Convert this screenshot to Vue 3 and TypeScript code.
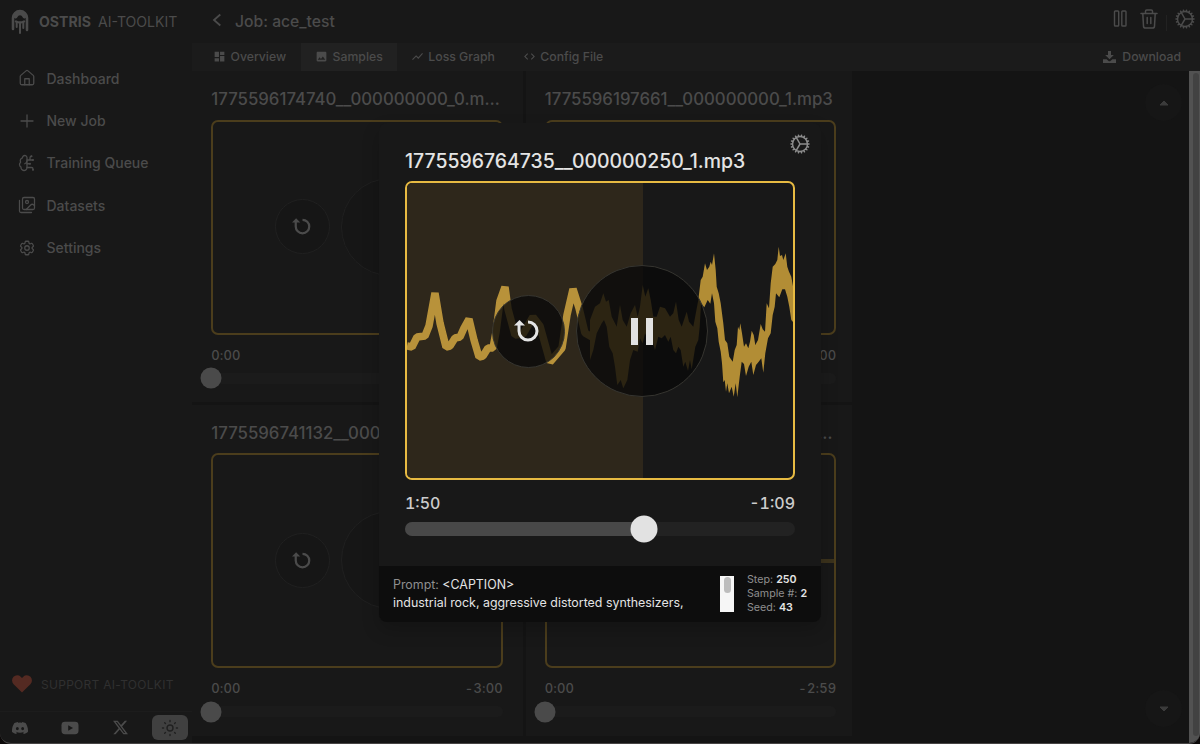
<script setup lang="ts">
interface NavItem { label: string; icon: string }
interface Sample { title: string; total: string; flat?: boolean }

const nav: NavItem[] = [
  { label: 'Dashboard', icon: 'home' },
  { label: 'New Job', icon: 'plus' },
  { label: 'Training Queue', icon: 'brain' },
  { label: 'Datasets', icon: 'images' },
  { label: 'Settings', icon: 'settings' },
]

const tabs: NavItem[] = [
  { label: 'Overview', icon: 'M3 13h8V3H3v10zm0 8h8v-6H3v6zm10 0h8V11h-8v10zm0-18v6h8V3h-8z' },
  { label: 'Samples', icon: 'M21 19V5c0-1.1-.9-2-2-2H5c-1.1 0-2 .9-2 2v14c0 1.1.9 2 2 2h14c1.1 0 2-.9 2-2zM8.5 13.5l2.5 3.01L14.5 12l4.5 6H5l3.500-4.500z' },
  { label: 'Loss Graph', icon: 'M3.5 18.490l6-6.010 4 4L22 6.920l-1.410-1.410-7.090 7.970-4-4L2 16.990z' },
  { label: 'Config File', icon: 'M9.400 16.600L4.800 12l4.600-4.600L8 6l-6 6 6 6 1.400-1.400zm5.200 0l4.600-4.600-4.600-4.600L16 6l6 6-6 6-1.400-1.400z' },
]

const samples: Sample[] = [
  { title: '1775596174740__000000000_0.mp3', total: '-3:00' },
  { title: '1775596197661__000000000_1.mp3', total: '-3:00' },
  { title: '1775596741132__000000250_0.mp3', total: '-3:00' },
  { title: '1775596764735__000000250_1.mp3', total: '-2:59', flat: true },
]

const current = 110
const duration = 179.8
const progress = `${(current / duration) * 100}%`

// Waveform samples: a thin trace for the intro, then a min/max envelope.
const intro = '0,163 5,164 10,154 18,153 22,143 28,110 33,140 39,164 43,163 48,155 53,154 57,145 62,136 67,157 72,174 76,173 81,165 86,165 89,149 93,118 98,104 101,126 108,152 116,151 126,134 133,143 143,179 155,165 160,132 166,106 172,125 178,150 185,154'
const top = '0,600 15,560 30,550 40,520 48,545 56,540 65,590 80,620 90,555 98,600 110,620 122,580 135,555 143,590 150,560 158,495 166,530 175,505 182,540 190,590 200,590 210,560 225,565 240,590 250,580 258,545 266,600 275,620 290,575 297,605 310,620 325,540 332,480 338,470 345,430 351,450 358,440 362,425 366,435 372,400 377,450 380,500 386,520 392,550 400,610 405,660 412,670 418,710 428,725 434,690 440,675 444,620 448,630 451,610 456,640 462,680 468,670 475,685 480,665 485,632 491,645 496,675 504,660 512,612 518,628 525,635 530,550 537,565 542,490 548,440 556,432 562,420 566,380 570,408 576,405 580,420 587,400 592,440 597,455 604,470 612,515'
const bottom = '612,610 604,600 598,560 592,530 585,508 577,508 568,532 558,520 554,560 548,585 542,640 534,655 526,700 520,758 514,715 506,725 498,735 490,765 484,725 476,740 468,768 462,732 455,725 449,770 442,832 437,790 431,830 425,800 417,820 412,790 408,815 404,780 400,787 396,730 392,695 386,665 382,625 376,605 372,550 366,520 361,551 353,540 343,562 333,550 329,620 325,660 316,680 305,748 300,720 294,752 286,725 280,740 272,690 265,680 258,700 250,690 242,650 235,665 225,645 215,655 205,650 195,690 185,655 175,660 165,640 158,670 150,655 143,695 130,690 120,720 112,780 100,805 92,780 82,795 75,740 68,700 58,680 50,620 42,600 35,610 20,640 10,690 0,720'
const toPoints = (s: string): string =>
  s.split(' ').map((p) => {
    const [x, y] = p.split(',').map(Number)
    return `${(590 + x / 3 - 407).toFixed(1)},${(120 + y / 3 - 183).toFixed(1)}`
  }).join(' ')
const envelope = `${toPoints(top)} ${toPoints(bottom)}`
</script>

<template>
  <div class="app">
    <aside class="sidebar">
      <div class="brand">
        <svg width="18" height="26" viewBox="0 0 18 26" fill="none" stroke="currentColor" stroke-linecap="round">
          <path d="M2 20V9a7 7 0 0 1 14 0v12" stroke-width="2.600" />
          <path d="M4.600 7.500a4.600 4.600 0 0 1 8.800 0" stroke-width="4" />
          <path d="M5.700 14v4M9 14v10M12.300 14v5" stroke-width="2" />
          <path d="M5 12.500q4 2 8 0" stroke-width="2.500" />
        </svg>
        <span><b>OSTRIS</b><i>AI-TOOLKIT</i></span>
      </div>
      <nav class="nav">
        <a v-for="n in nav" :key="n.label">
          <svg width="18" height="18" viewBox="0 0 24 24" fill="none" stroke="currentColor" stroke-width="1.700" stroke-linecap="round" stroke-linejoin="round">
            <template v-if="n.icon === 'home'"><path d="M15 21v-8H9v8" /><path d="M3 10a2 2 0 0 1 .7-1.500l7-6a2 2 0 0 1 2.600 0l7 6A2 2 0 0 1 21 10v9a2 2 0 0 1-2 2H5a2 2 0 0 1-2-2z" /></template>
            <path v-else-if="n.icon === 'plus'" d="M4 12h16M12 4v16" />
            <template v-else-if="n.icon === 'brain'"><path d="M12 5a3 3 0 1 0-5.997.125 4 4 0 0 0-2.526 5.770 4 4 0 0 0 .556 6.588A4 4 0 1 0 12 18Z" /><path d="M9 13a4.500 4.500 0 0 0 3-4M12 13h4M12 18h6a2 2 0 0 1 2 2v1M12 8h8M16 8V5a2 2 0 0 1 2-2" /><circle cx="16" cy="13" r=".5" /><circle cx="18" cy="3" r=".5" /><circle cx="20" cy="21" r=".5" /><circle cx="20" cy="8" r=".5" /></template>
            <template v-else-if="n.icon === 'images'"><path d="M18 22H4a2 2 0 0 1-2-2V6M22 13l-1.300-1.300a2.400 2.400 0 0 0-3.400 0L11 18" /><circle cx="12" cy="8" r="2" /><rect x="6" y="2" width="16" height="16" rx="2" /></template>
            <template v-else><path d="M9.594 3.940c.09-.542.56-.94 1.110-.94h2.593c.55 0 1.020.398 1.110.94l.213 1.281c.063.374.313.686.645.87.074.04.147.083.22.127.325.196.72.257 1.075.124l1.217-.456a1.125 1.125 0 0 1 1.370.49l1.296 2.247a1.125 1.125 0 0 1-.26 1.431l-1.003.827c-.293.241-.438.613-.43.992a7.723 7.723 0 0 1 0 .255c-.008.378.137.75.43.991l1.004.827c.424.35.534.955.26 1.430l-1.298 2.247a1.125 1.125 0 0 1-1.369.491l-1.217-.456c-.355-.133-.75-.072-1.076.124a6.470 6.470 0 0 1-.22.128c-.331.183-.581.495-.644.869l-.213 1.281c-.09.543-.56.94-1.110.94h-2.594c-.55 0-1.019-.398-1.110-.94l-.213-1.281c-.062-.374-.312-.686-.644-.87a6.520 6.520 0 0 1-.22-.127c-.325-.196-.72-.257-1.076-.124l-1.217.456a1.125 1.125 0 0 1-1.369-.49l-1.297-2.247a1.125 1.125 0 0 1 .26-1.431l1.004-.827c.292-.24.437-.613.43-.991a6.932 6.932 0 0 1 0-.255c.007-.38-.138-.751-.43-.992l-1.004-.827a1.125 1.125 0 0 1-.26-1.430l1.297-2.247a1.125 1.125 0 0 1 1.370-.491l1.216.456c.356.133.751.072 1.076-.124.072-.044.146-.086.22-.128.332-.183.582-.495.644-.869l.214-1.280Z" /><circle cx="12" cy="12" r="3" /></template>
          </svg>
          <span>{{ n.label }}</span>
        </a>
      </nav>
      <div class="support">
        <svg width="20" height="18" viewBox="0 0 20 18"><path d="M10 17.500L1.600 9.200A5.300 5.300 0 0 1 1.500 1.800 5 5 0 0 1 8.700 1.700L10 3l1.300-1.300a5 5 0 0 1 7.200.1 5.300 5.300 0 0 1-.1 7.400z" fill="#542a22" /></svg>
        <span>SUPPORT AI-TOOLKIT</span>
      </div>
      <div class="social">
        <span><svg width="16" height="16" viewBox="0 0 16 16" fill="currentColor"><path d="M13.545 2.907a13.200 13.200 0 0 0-3.257-1.011.05.05 0 0 0-.052.025c-.141.25-.297.577-.406.833a12.200 12.200 0 0 0-3.658 0 8 8 0 0 0-.412-.833.05.05 0 0 0-.052-.025c-1.125.194-2.220.534-3.257 1.011a.04.04 0 0 0-.021.018C.356 6.024-.213 9.047.066 12.032q.003.022.021.037a13.300 13.300 0 0 0 3.995 2.020.05.05 0 0 0 .056-.019q.463-.63.818-1.329a.05.05 0 0 0-.01-.059l-.018-.011a9 9 0 0 1-1.248-.595.05.05 0 0 1-.02-.066l.015-.019q.127-.095.248-.195a.05.05 0 0 1 .051-.007c2.619 1.196 5.454 1.196 8.041 0a.05.05 0 0 1 .053.007q.121.1.248.195a.05.05 0 0 1-.004.085 8 8 0 0 1-1.249.594.05.05 0 0 0-.03.03.05.05 0 0 0 .003.041c.24.465.515.909.817 1.329a.05.05 0 0 0 .056.019 13.200 13.200 0 0 0 4.001-2.020.05.05 0 0 0 .021-.037c.334-3.451-.559-6.449-2.366-9.106a.03.03 0 0 0-.02-.019m-8.198 7.307c-.789 0-1.438-.724-1.438-1.612s.637-1.613 1.438-1.613c.807 0 1.450.73 1.438 1.613 0 .888-.637 1.612-1.438 1.612m5.316 0c-.788 0-1.438-.724-1.438-1.612s.637-1.613 1.438-1.613c.807 0 1.451.73 1.438 1.613 0 .888-.631 1.612-1.438 1.612" /></svg></span>
        <span><svg width="18" height="14" viewBox="0 0 18 14"><rect x=".5" y=".8" width="17" height="12.400" rx="3.400" fill="currentColor" /><path d="M7.200 4.200v5.600L12 7z" fill="#181818" /></svg></span>
        <span><svg width="15" height="15" viewBox="0 0 16 16" fill="currentColor"><path d="M12.600.75h2.454l-5.360 6.142L16 15.250h-4.937l-3.867-5.070-4.425 5.070H.316l5.733-6.570L0 .75h5.063l3.495 4.633L12.601.75Zm-.86 13.028h1.360L4.323 2.145H2.865z" /></svg></span>
        <span class="theme"><svg width="18" height="18" viewBox="0 0 24 24" fill="none" stroke="#202020" stroke-width="1.900" stroke-linecap="round"><circle cx="12" cy="12" r="4" /><path d="M12 2v1.500M12 20.500V22M2 12h1.500M20.500 12H22M4.900 4.900l1 1M18.100 18.100l1 1M4.900 19.100l1-1M18.100 5.900l1-1" /></svg></span>
      </div>
    </aside>

    <main class="main">
      <header class="topbar">
        <svg width="10" height="14" viewBox="0 0 10 14" fill="none" stroke="currentColor" stroke-width="1.800"><path d="M8.300 1.500L2 7l6.300 5.500" /></svg>
        <h1>Job: ace_test</h1>
        <div class="actions">
          <svg width="14" height="18" viewBox="0 0 14 18" fill="none" stroke="currentColor" stroke-width="1.400"><rect x="1.500" y="1" width="4.200" height="15" rx=".8" /><rect x="8.800" y="1" width="4.200" height="15" rx=".8" /></svg>
          <svg class="trash" width="18" height="20" viewBox="0 0 18 20" fill="none" stroke="currentColor" stroke-width="1.500" stroke-linecap="round" stroke-linejoin="round"><path d="M1 4.500h16M5.500 4.500V2.300Q5.500 1 6.800 1h4.400q1.300 0 1.300 1.300v2.200M2.800 4.500l.7 12.600q.1 1.900 2 1.900h7q1.900 0 2-1.900l.7-12.600M7.200 8.500v6M10.800 8.500v6" /></svg>
          <i class="rule"></i>
          <svg width="24" height="24" viewBox="0 0 24 24" fill="none" stroke="currentColor" stroke-width="1.500" stroke-linecap="round"><path d="M4.500 12a7.500 7.500 0 0 0 15 0m-15 0a7.500 7.500 0 1 1 15 0m-15 0H3m16.500 0H21m-1.500 0H12m-8.457 3.077 1.410-.513m14.095-5.130 1.410-.513M5.106 17.785l1.150-.964m11.490-9.642 1.149-.964M7.501 19.795l.75-1.300m7.500-12.990.75-1.300m-6.063 16.658.26-1.477m2.605-14.772.26-1.477m0 17.726-.26-1.477M10.698 4.614l-.26-1.477M16.500 19.794l-.75-1.299M7.500 4.205 12 12m6.894 5.785-1.149-.964M6.256 7.178l-1.150-.964m15.352 8.864-1.410-.513M4.954 9.435l-1.410-.514M12.002 12l-3.750 6.495" /></svg>
        </div>
      </header>
      <div class="tabs">
        <span v-for="t in tabs" :key="t.label" class="tab" :class="{ active: t.label === 'Samples' }">
          <svg width="13" height="13" viewBox="0 0 24 24" fill="currentColor"><path :d="t.icon" /></svg>{{ t.label }}
        </span>
        <span class="tab download">
          <svg width="13" height="14" viewBox="0 0 13 14" fill="currentColor"><path d="M5 1h3v4h2.800L6.500 9.200 2.200 5H5z" /><path d="M0 9.200h3.600l1.700 1.500q1.200 1 2.400 0l1.700-1.500H13V13H0z" /></svg>Download
        </span>
      </div>
      <div class="content">
        <div class="grid">
          <article v-for="s in samples" :key="s.title" class="card">
            <h2>{{ s.title }}</h2>
            <div class="wave">
              <div v-if="s.flat" class="flat"></div>
              <div class="controls">
                <span class="round small"><svg viewBox="0 0 28 28" fill="none" stroke="currentColor" stroke-width="3"><path d="M14 5a9 9 0 1 1-9 9V8" /><path d="M0 8.500L5.500 3l5.500 5.500z" fill="currentColor" stroke="none" /></svg></span>
                <span class="round big"></span>
              </div>
            </div>
            <div class="times"><span>0:00</span><span>{{ s.total }}</span></div>
            <div class="track"><i class="knob"></i></div>
          </article>
        </div>
        <div class="jump">
          <span><svg width="10" height="6" viewBox="0 0 10 6"><path d="M1 5h8L5 1z" fill="#3b3b3b" stroke="#3b3b3b" stroke-linejoin="round" /></svg></span>
          <span><svg width="10" height="6" viewBox="0 0 10 6"><path d="M1 1h8L5 5z" fill="#3b3b3b" stroke="#3b3b3b" stroke-linejoin="round" /></svg></span>
        </div>
        <div class="scroll"><i></i></div>
      </div>
    </main>

    <section class="modal">
      <svg class="gear" width="24" height="24" viewBox="0 0 24 24" fill="none" stroke="currentColor" stroke-width="1.500" stroke-linecap="round"><path d="M4.500 12a7.500 7.500 0 0 0 15 0m-15 0a7.500 7.500 0 1 1 15 0m-15 0H3m16.500 0H21m-1.500 0H12m-8.457 3.077 1.410-.513m14.095-5.130 1.410-.513M5.106 17.785l1.150-.964m11.490-9.642 1.149-.964M7.501 19.795l.75-1.300m7.500-12.990.75-1.300m-6.063 16.658.26-1.477m2.605-14.772.26-1.477m0 17.726-.26-1.477M10.698 4.614l-.26-1.477M16.500 19.794l-.75-1.299M7.500 4.205 12 12m6.894 5.785-1.149-.964M6.256 7.178l-1.150-.964m15.352 8.864-1.410-.513M4.954 9.435l-1.410-.514M12.002 12l-3.750 6.495" /></svg>
      <div class="player">
        <h2>1775596764735__000000250_1.mp3</h2>
        <div class="wave">
          <div class="played" :style="{ width: progress }"></div>
          <svg class="trace" width="386" height="295" viewBox="0 0 386 295"><polyline :points="intro" fill="none" stroke="#b8923a" stroke-width="7.500" stroke-linejoin="bevel" /><polygon :points="envelope" fill="#b28d35" /></svg>
          <div class="controls">
            <span class="round small"><svg viewBox="0 0 28 28" fill="none" stroke="currentColor" stroke-width="3"><path d="M14 5a9 9 0 1 1-9 9V8" /><path d="M0 8.500L5.500 3l5.500 5.500z" fill="currentColor" stroke="none" /></svg></span>
            <span class="round big"><i></i><i></i></span>
          </div>
        </div>
        <div class="times"><span>1:50</span><span>-1:09</span></div>
        <div class="track"><div class="fill" :style="{ width: progress }"></div><i class="knob" :style="{ left: progress }"></i></div>
      </div>
      <footer class="info">
        <p class="prompt"><em>Prompt:</em> &lt;CAPTION&gt;<br>industrial rock, aggressive distorted synthesizers,</p>
        <div class="mini"><i></i></div>
        <p class="meta"><em>Step:</em> <b>250</b><br><em>Sample #:</em> <b>2</b><br><em>Seed:</em> <b>43</b></p>
      </footer>
    </section>
  </div>
</template>

<style>
body { margin: 0; background: #0c0909; overflow: hidden; }
</style>

<style scoped>
* { box-sizing: border-box; }
h1, h2, p { margin: 0; font-weight: 400; }
i, em { font-style: normal; }
svg { display: block; flex: none; }
.app { position: relative; display: flex; width: 1200px; height: 744px; overflow: hidden; background: #181818; color: #4b4b4b; font-family: Inter, "Liberation Sans", sans-serif; border-bottom: 1px solid #464444; border-radius: 0 0 11px 11px; }
.sidebar { width: 192px; display: flex; flex-direction: column; flex: none; }
.brand { display: flex; align-items: center; gap: 10px; height: 43px; padding: 0 0 0 11px; font-size: 14.100px; }
.brand b { font-weight: 700; margin-right: 7px; }
.nav { padding: 14px 0 0 18.500px; }
.nav a { display: flex; align-items: center; gap: 10px; height: 42.400px; font-size: 14px; font-weight: 500; }
.nav svg { margin-left: -.5px; margin-right: .5px; }
.support { display: flex; align-items: center; gap: 9px; margin-top: auto; padding: 0 0 18px 12px; font-size: 12px; color: #303030; letter-spacing: .28px; }
.social { height: 32px; border-top: 1px solid #1c1c1c; display: flex; gap: 14.300px; padding-left: 1.500px; align-items: center; }
.social span { width: 36px; height: 25px; display: grid; place-items: center; }
.social .theme { background: #404040; border-radius: 6px; }
.main { flex: 1; display: flex; flex-direction: column; min-width: 0; }
.topbar { height: 43px; display: flex; align-items: center; padding: 0 3px 3px 20px; }
.topbar h1 { font-size: 15.700px; margin-left: 13px; padding-top: 2px; font-weight: 500; }
.actions { margin-left: auto; display: flex; align-items: center; margin-top: -3px; }
.trash { margin-left: 13px; }
.rule { width: 1px; height: 16px; background: #222; margin: 8px 6px 0 8px; }
.tabs { height: 28px; display: flex; background: #1b1b1b; }
.tab { display: flex; align-items: center; gap: 4.500px; padding: 0 14px 1px 14px; font-size: 12.250px; font-weight: 500; }
.tab:first-child { padding-left: 21px; padding-right: 15px; }
.tab.active { background: #212121; }
.download { margin-left: auto; padding-right: 19px; gap: 6px; }
.content { flex: 1; background: #141414; display: flex; min-height: 0; }
.grid { display: grid; grid-template-columns: 331px 326px; grid-template-rows: 331px 331px; gap: 2.500px; align-content: start; }
.card { background: #181818; padding: 16px 0 0 19.300px; min-width: 0; }
.card > * { width: 291.500px; }
.card h2 { font-size: 16.770px; font-weight: 450; line-height: 24px; height: 32.500px; white-space: nowrap; overflow: hidden; text-overflow: ellipsis; }
.wave { position: relative; height: 215px; border: 2px solid #4b3d1c; border-radius: 7px; display: flex; align-items: center; justify-content: center; overflow: hidden; }
.flat { position: absolute; left: 0; right: 0; top: 104px; height: 4px; background: #3b321c; }
.controls { position: relative; display: flex; align-items: center; gap: 11px; }
.card .controls { margin-top: -1px; }
.round { border: 1px solid #202020; border-radius: 50%; background: #161616; display: flex; align-items: center; justify-content: center; }
.card .small { width: 55px; height: 55px; }
.card .big { width: 98px; height: 98px; }
.card .small svg { width: 21px; height: 21px; }
.times { display: flex; justify-content: space-between; font-size: 13px; font-weight: 500; line-height: 16px; margin-top: 12px; font-variant-numeric: tabular-nums; letter-spacing: .15px; }
.card .track { margin-top: 10px; }
.track { position: relative; height: 11px; border-radius: 7px; background: #1b1b1b; }
.knob { position: absolute; width: 21px; height: 21px; border-radius: 50%; background: #4a4a4a; left: 0; top: 50%; transform: translate(-50%, -50%); }
.jump { flex: 1; padding: 13px 7px 16px 0; display: flex; flex-direction: column; justify-content: space-between; align-items: flex-end; }
.jump span { width: 37px; height: 37px; border-radius: 50%; background: #161616; display: grid; place-items: center; }
.scroll { width: 11px; background: #525252; padding: 2px 1px 7px 4px; }
.scroll i { display: block; height: 100%; background: #424242; border-radius: 4px; }
.modal { position: absolute; left: 379px; top: 123px; width: 442px; height: 499px; background: #181818; border-radius: 8px; overflow: hidden; display: flex; flex-direction: column; color: #e4e4e4; box-shadow: 0 8px 18px rgba(0, 0, 0, .2); }
.gear { position: absolute; right: 9px; top: 9px; color: #8c8c8c; }
.player { flex: 1; padding: 25px 26px 0; }
.player h2 { font-size: 19.450px; font-weight: 450; line-height: 26px; height: 33px; white-space: nowrap; }
.player .wave { height: 299px; border-color: #e7ba42; }
.played { position: absolute; left: 0; top: 0; bottom: 0; background: #2e271b; }
.trace { position: absolute; left: 0; top: 0; }
.player .controls { margin: 1px 0 0 -1px; }
.player .round { background: rgba(10, 10, 10, .8); border-color: #363530; }
.player .small { width: 73px; height: 73px; }
.player .big { width: 132px; height: 132px; gap: 8px; }
.player .small svg { width: 28px; height: 28px; }
.big i { width: 7px; height: 27px; background: #e2e2e2; }
.player .times { font-size: 16px; line-height: 20px; margin-top: 13px; color: #ccc; letter-spacing: 0; }
.player .track { height: 14px; margin-top: 9px; background: #222; }
.fill { height: 100%; background: #484848; border-radius: 7px 0 0 7px; }
.player .knob { width: 27px; height: 27px; background: #e2e2e2; }
.info { height: 56px; background: #0d0d0d; display: flex; padding: 10px 14px; font-size: 12.400px; font-weight: 500; }
.info em { color: #8f8f8f; font-weight: 400; }
.prompt { line-height: 18px; flex: 1; white-space: nowrap; }
.mini { width: 14px; height: 36px; background: #f6f6f6; padding: 1px 3px 0 4px; }
.mini i { display: block; width: 7px; height: 16px; background: #bdbdbd; border-radius: 4px; }
.meta { width: 60px; margin: -3px 0 0 13.500px; font-size: 10.700px; line-height: 14px; white-space: nowrap; }
.meta b { font-weight: 600; }
</style>
